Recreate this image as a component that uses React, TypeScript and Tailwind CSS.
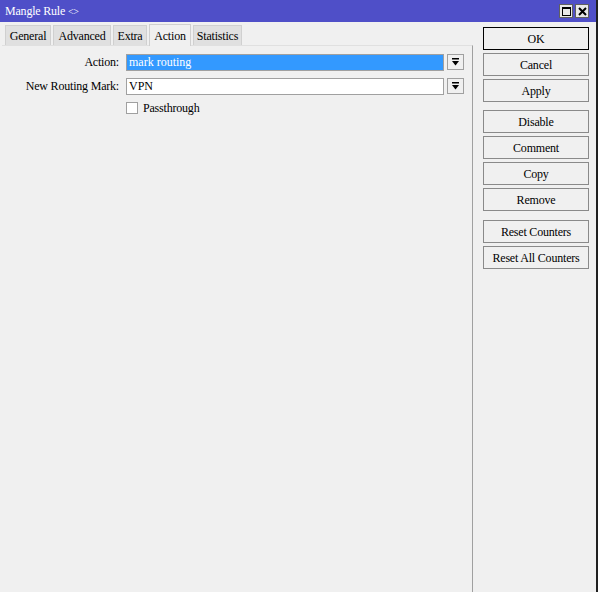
const font = { fontFamily: '"Liberation Serif", "DejaVu Serif", serif' };

const tabs = [
  { label: "General", width: "w-[46px]" },
  { label: "Advanced", width: "w-[58px]" },
  { label: "Extra", width: "w-[34px]" },
  { label: "Action", width: "w-[42px]" },
  { label: "Statistics", width: "w-[49px]" },
];
const active = "Action";

function DropButton() {
  return (
    <div className="ml-[3px] flex h-[16px] w-[17px] items-center justify-center border border-[#a0a0a0] bg-[#f0f0f0]">
      <svg width="9" height="9" viewBox="0 0 9 9">
        <rect x="1" y="0" width="7" height="1.5" fill="#000" />
        <path d="M1 3 H8 L4.5 7.5 Z" fill="#000" />
      </svg>
    </div>
  );
}

function SideButton({ label, primary }: { label: string; primary?: boolean }) {
  return (
    <button
      className={`flex h-[23px] w-[106px] items-center justify-center bg-[#f0f0f0] text-[12px] tracking-[-0.2px] text-black ${
        primary ? "border border-black" : "border border-[#8a8a8a]"
      }`}
    >
      {label}
    </button>
  );
}

export default function App() {
  return (
    <div
      style={font}
      className="flex h-[592px] w-[598px] flex-col overflow-hidden border-r-2 border-[#202020] bg-[#f0f0f0] text-[12px] text-black"
    >
      {/* title bar */}
      <div className="flex h-[22px] items-center justify-between bg-[#4f4fc8] pl-[5px] pr-[7px]">
        <span className="text-[12px] tracking-[-0.2px] text-white">
          Mangle Rule <span className="text-[10px]">&lt;&gt;</span>
        </span>
        <div className="flex gap-[2px]">
          <div className="flex h-[14px] w-[14px] items-center justify-center border border-[#606060] bg-[#e8e8e8]">
            <div className="h-[9px] w-[9px] border border-t-2 border-black" />
          </div>
          <div className="flex h-[14px] w-[14px] items-center justify-center border border-[#606060] bg-[#e8e8e8]">
            <svg width="9" height="9" viewBox="0 0 9 9">
              <path d="M1 1 L8 8 M8 1 L1 8" stroke="#000" strokeWidth="2" />
            </svg>
          </div>
        </div>
      </div>

      <div className="flex flex-1">
        {/* left: tabs and form */}
        <div className="flex w-[473px] flex-col pl-[2px]">
          <div className="flex h-[23px] items-end gap-[2px] pl-[3px] tracking-[-0.2px]">
            {tabs.map((t) =>
              t.label === active ? (
                <div
                  key={t.label}
                  className={`relative top-[1px] flex h-[22px] items-start justify-center border border-b-0 border-[#d0d0d0] bg-[#f0f0f0] pt-[2px] ${t.width}`}
                >
                  {t.label}
                </div>
              ) : (
                <div
                  key={t.label}
                  className={`flex h-[20px] items-center justify-center border border-b-0 border-[#d0d0d0] bg-[#e0e0e0] ${t.width}`}
                >
                  {t.label}
                </div>
              )
            )}
          </div>
          <div className="flex flex-1 flex-col border-r border-t border-[#a0a0a0] border-t-[#e0e0e0] pt-[7px]">
            <div className="flex items-center">
              <span className="w-[117px] text-right tracking-[-0.2px]">Action:</span>
              <div className="ml-[7px] flex h-[17px] w-[318px] items-center border border-[#a0a0a0] bg-[#3399ff] pl-[2px] text-white">
                mark routing
              </div>
              <DropButton />
            </div>
            <div className="mt-[6px] flex items-center">
              <span className="w-[117px] text-right tracking-[-0.2px]">New Routing Mark:</span>
              <div className="ml-[7px] flex h-[17px] w-[318px] items-center border border-[#a0a0a0] bg-white pl-[2px]">
                VPN
              </div>
              <DropButton />
            </div>
            <div className="ml-[124px] mt-[4px] flex items-center gap-[5px]">
              <div className="h-[12px] w-[12px] border border-[#a0a0a0] bg-white" />
              <span className="tracking-[-0.2px]">Passthrough</span>
            </div>
          </div>
        </div>

        {/* right: action buttons */}
        <div className="flex flex-col pl-[10px] pt-[5px]">
          <SideButton label="OK" primary />
          <div className="mt-[3px] flex flex-col gap-[3px]">
            <SideButton label="Cancel" />
            <SideButton label="Apply" />
          </div>
          <div className="mt-[8px] flex flex-col gap-[3px]">
            <SideButton label="Disable" />
            <SideButton label="Comment" />
            <SideButton label="Copy" />
            <SideButton label="Remove" />
          </div>
          <div className="mt-[9px] flex flex-col gap-[3px]">
            <SideButton label="Reset Counters" />
            <SideButton label="Reset All Counters" />
          </div>
        </div>
      </div>
    </div>
  );
}
